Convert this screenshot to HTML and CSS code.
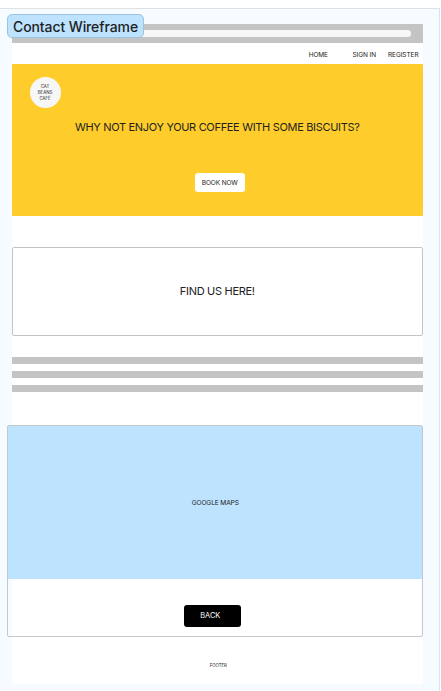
FILE: index.html
```
<!DOCTYPE html>
<html lang="en">
<head>
<meta charset="utf-8">
<title>Contact Wireframe</title>
<link rel="stylesheet" href="styles.css">
</head>
<body>
<main class="board">
  <h1 class="board-label">Contact Wireframe</h1>
  <div class="frame">
    <div class="browser-bar"><div class="address"></div></div>
    <nav class="nav"><a class="home">HOME</a><a class="sign-in">SIGN IN</a><a class="register">REGISTER</a></nav>
    <section class="hero">
      <div class="logo">CAT<br>BEANS<br>CAFÉ</div>
      <h2 class="hero-title">WHY NOT ENJOY YOUR COFFEE WITH SOME BISCUITS?</h2>
      <button class="book">BOOK NOW</button>
    </section>
    <section class="find">FIND US HERE!</section>
    <div class="lines"><div class="line"></div><div class="line"></div><div class="line last"></div></div>
    <section class="location">
      <div class="map"><span>GOOGLE MAPS</span></div>
      <button class="back">BACK</button>
    </section>
    <footer class="footer">FOOTER</footer>
  </div>
</main>
</body>
</html>
```
FILE: styles.css
```
* { box-sizing: border-box; }
body {
  margin: 0;
  padding-top: 8px;
  height: 691px;
  overflow: hidden;
  background: #fff;
  color: #222;
  font-family: Inter, "Liberation Sans", sans-serif;
}
h1, h2 { margin: 0; }
button { border: 0; padding: 0; font-family: inherit; color: inherit; }
.board {
  position: relative;
  width: 440px;
  height: 683px;
  padding: 15px 0 0 12px;
  border-top: 1px solid #dfe2e5;
  border-right: 1px solid #cfe7fc;
  background: #f5fbff;
}
.board-label {
  position: absolute;
  left: 7px;
  top: 5px;
  width: 137px;
  height: 24px;
  padding-left: 5px;
  border: 1px solid #9dc3de;
  border-radius: 5px;
  background: #bde3ff;
  font-size: 14px;
  font-weight: 500;
  letter-spacing: -0.1px;
  line-height: 24px;
  white-space: nowrap;
}
.frame { width: 410.5px; height: 660px; background: #fff; }
.browser-bar {
  height: 19px;
  padding: 6.3px 11.5px 0 12px;
  border-radius: 1px 1px 0 0;
  background: #c4c4c4;
}
.address { height: 6.7px; border-radius: 3.3px; background: #f7f7f7; }
.nav {
  display: flex;
  justify-content: flex-end;
  height: 21px;
  padding: 1px 4px 0 0;
  font-size: 6.5px;
  letter-spacing: -0.08px;
  line-height: 22px;
}
.sign-in { margin: 0 12px 0 24.5px; }
.hero {
  display: flex;
  flex-direction: column;
  align-items: center;
  height: 152px;
  padding-top: 13px;
  border-radius: 1px;
  background: #ffcd2b;
}
.logo {
  align-self: flex-start;
  width: 31px;
  height: 31px;
  margin-left: 17.5px;
  padding-top: 6.5px;
  border-radius: 50%;
  background: #f7f7f7;
  font-size: 4.3px;
  line-height: 6.4px;
  text-align: center;
}
.hero-title {
  margin-top: 11px;
  font-size: 11px;
  font-weight: 400;
  letter-spacing: -0.32px;
  line-height: 16px;
  white-space: nowrap;
}
.book {
  width: 50px;
  height: 19px;
  margin-top: 38px;
  margin-left: 5px;
  border-radius: 3px;
  background: #fff;
  font-size: 6.6px;
  letter-spacing: -0.16px;
}
.find {
  height: 89px;
  margin-top: 31px;
  border: 1px solid #c4c4c4;
  border-radius: 2px;
  font-size: 11px;
  letter-spacing: -0.3px;
  line-height: 87px;
  text-align: center;
}
.lines { display: grid; row-gap: 7px; margin-top: 21px; }
.line { height: 7px; background: #c4c4c4; }
.last { height: 6.5px; }
.location {
  display: flex;
  flex-direction: column;
  align-items: center;
  width: 415.5px;
  height: 212px;
  margin: 33.5px 0 0 -5px;
  border: 1px solid #c4c8cb;
  border-radius: 2px;
}
.map {
  width: 100%;
  height: 153px;
  padding-left: 1px;
  background: #bde3ff;
  font-size: 6.6px;
  letter-spacing: -0.12px;
  line-height: 154px;
  text-align: center;
}
.back {
  width: 57px;
  height: 22px;
  margin-top: 25.5px;
  margin-right: 5px;
  padding-right: 4px;
  border-radius: 3px;
  background: #000;
  color: #fff;
  font-size: 7.4px;
  letter-spacing: -0.05px;
}
.footer {
  padding-left: 2px;
  font-size: 4.4px;
  letter-spacing: -0.08px;
  line-height: 58px;
  text-align: center;
}
```
